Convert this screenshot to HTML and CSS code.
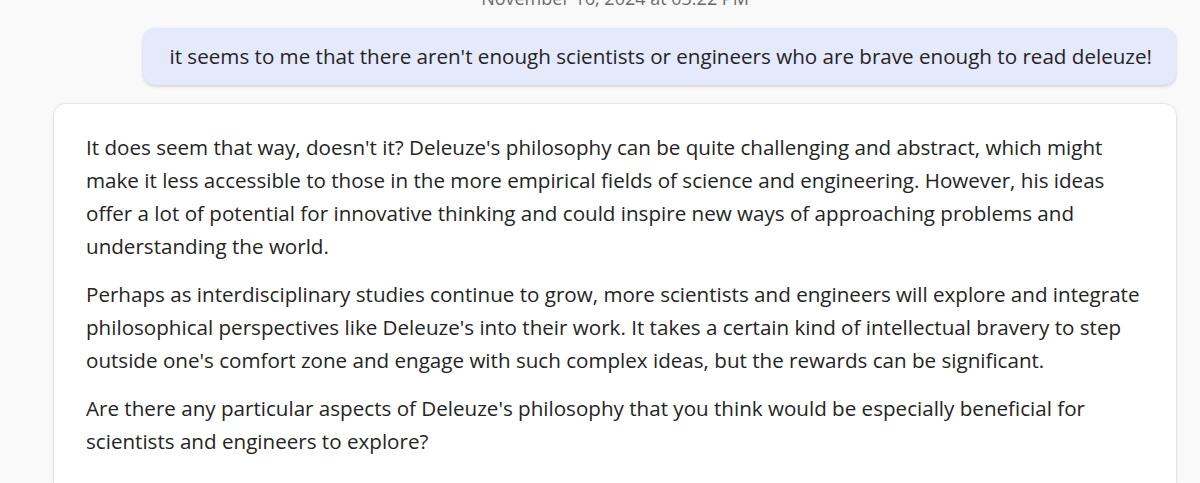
FILE: index.html
```html
<!DOCTYPE html>
<html lang="en">
<head>
<meta charset="utf-8">
<title>Chat</title>
<link rel="stylesheet" href="styles.css">
</head>
<body>
<main class="thread">
  <div class="timestamp">November 16, 2024 at 03:22 PM</div>
  <div class="user-row">
    <div class="user-bubble">it seems to me that there aren't enough scientists or engineers who are brave enough to read deleuze!</div>
  </div>
  <article class="reply">
    <p>It does seem that way, doesn't it? Deleuze's philosophy can be quite challenging and abstract, which might make it less accessible to those in the more empirical fields of science and engineering. However, his ideas offer a lot of potential for innovative thinking and could inspire new ways of approaching problems and understanding the world.</p>
    <p>Perhaps as interdisciplinary studies continue to grow, more scientists and engineers will explore and integrate philosophical perspectives like Deleuze's into their work. It takes a certain kind of intellectual bravery to step outside one's comfort zone and engage with such complex ideas, but the rewards can be significant.</p>
    <p>Are there any particular aspects of Deleuze's philosophy that you think would be especially beneficial for scientists and engineers to explore?</p>
  </article>
</main>
</body>
</html>
```
FILE: styles.css
```css
html, body {
  margin: 0;
  padding: 0;
  background: #f9f9f9;
  height: 100%;
  overflow: hidden;
}
body {
  font-family: "Open Sans", "Noto Sans", sans-serif;
  color: #242424;
}
.thread {
  margin: -11px 24px 0 54px;
  display: flex;
  flex-direction: column;
}
.timestamp {
  text-align: center;
  font-size: 18px;
  line-height: 18px;
  color: #6b6b6b;
  margin-bottom: 21px;
}
.user-row {
  display: flex;
  justify-content: flex-end;
}
.user-bubble {
  background: #e4e9fb;
  border-radius: 12px;
  padding: 12px 24px 12px 26px;
  font-size: 20.6px;
  line-height: 33px;
  box-shadow: 0 1px 3px rgba(0,0,0,0.12), 0 2px 4px rgba(0,0,0,0.06);
}
.reply {
  margin-top: 19px;
  background: #ffffff;
  border-radius: 12px 12px 0 0;
  box-shadow: 0 0 0 1px rgba(0,0,0,0.05), 0 1px 4px rgba(0,0,0,0.08);
  padding: 27px 28px 26px 32px;
  font-size: 20.6px;
  line-height: 33px;
}
.reply p {
  margin: 0 0 15px 0;
}
.reply p:last-child {
  margin-bottom: 0;
}
```
